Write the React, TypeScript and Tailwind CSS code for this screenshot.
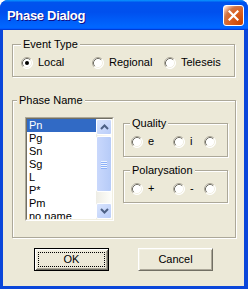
import React from "react";

// ── Bits ──────────────────────────────────────────────────────────────────────

const etched =
  "border border-[#ACA899] shadow-[1px_1px_0_#fff,inset_1px_1px_0_#fff]";

function Radio({ checked = false }: { checked?: boolean }) {
  return (
    <svg width="12" height="12" viewBox="0 0 12 12" className="shrink-0">
      <circle cx="6" cy="6" r="5.5" fill="#fff" />
      <path d="M2.11 9.89A5.5 5.5 0 0 1 9.89 2.11" fill="none" stroke="#ACA899" />
      <path d="M9.89 2.11A5.5 5.5 0 0 1 2.11 9.89" fill="none" stroke="#fff" />
      <path d="M2.82 9.18A4.5 4.5 0 0 1 9.18 2.82" fill="none" stroke="#716F64" />
      <path d="M9.18 2.82A4.5 4.5 0 0 1 2.82 9.18" fill="none" stroke="#F1EFE2" />
      {checked && <circle cx="6" cy="6" r="2" fill="#000" />}
    </svg>
  );
}

function RadioItem({ label, checked, w }: { label?: string; checked?: boolean; w: string }) {
  return (
    <label className={`flex items-center gap-[5px] h-[13px] ${w}`}>
      <Radio checked={checked} />
      {label && <span className="leading-[13px]">{label}</span>}
    </label>
  );
}

function ScrollButton({ dir }: { dir: "up" | "down" }) {
  return (
    <div className="h-[16px] w-[16px] rounded-[2px] border border-[#fff] bg-[linear-gradient(135deg,#d9e4fd,#b9cdf9)] flex items-center justify-center">
      <svg width="9" height="6" viewBox="0 0 9 6">
        <path
          d={dir === "up" ? "M1 5L4.5 1.5L8 5" : "M1 1L4.5 4.5L8 1"}
          fill="none"
          stroke="#4D6185"
          strokeWidth="2"
        />
      </svg>
    </div>
  );
}

// ── Listbox ───────────────────────────────────────────────────────────────────

const PHASES = ["Pn", "Pg", "Sn", "Sg", "L", "P*", "Pm", "no name"];

function ListBox() {
  return (
    <div className="w-[89px] h-[104px] border border-t-[#ACA899] border-l-[#ACA899] border-r-white border-b-white">
      <div className="h-full flex border border-t-[#716F64] border-l-[#716F64] border-r-[#F1EFE2] border-b-[#F1EFE2] bg-white">
        <div className="flex-1 overflow-hidden">
          {PHASES.map((p, i) => (
            <div
              key={p}
              className={`h-[13px] leading-[13px] pl-[2px] whitespace-nowrap ${
                i === 0 ? "bg-[#316AC5] text-white" : "text-black"
              }`}
            >
              {p}
            </div>
          ))}
        </div>
        <div className="w-[16px] flex flex-col bg-[linear-gradient(90deg,#EEEDE5,#FEFEFB)]">
          <ScrollButton dir="up" />
          <div className="flex-1 pt-[1px]">
            <div className="h-[56px] rounded-[2px] border border-white bg-[linear-gradient(90deg,#c9d8fc,#b6cbf8)] flex flex-col items-center justify-center gap-[1px]">
              {[0, 1, 2, 3].map((k) => (
                <div key={k} className="w-[6px] h-[1px] bg-[#EEF4FE] shadow-[0_1px_0_#8CB0F8]" />
              ))}
            </div>
          </div>
          <ScrollButton dir="down" />
        </div>
      </div>
    </div>
  );
}

// ── Dialog ────────────────────────────────────────────────────────────────────

export default function App() {
  return (
    <div className="w-[248px] h-[289px] flex flex-col rounded-t-[8px] overflow-hidden bg-[#0A46DA] font-['Liberation_Sans',Arial,sans-serif] text-[11px] text-black select-none">
      {/* Title bar */}
      <div className="h-[30px] shrink-0 flex items-start bg-[linear-gradient(180deg,#0997ff,#0053ee_8%,#0050ee_40%,#06f_88%,#06f_93%,#005bff_95%,#003dd7_96%,#003dd7)]">
        <div className="ml-[7px] mt-[8px] leading-[15px] text-[13px] font-bold tracking-[-0.3px] text-white [text-shadow:1px_1px_#0f1089]">
          Phase Dialog
        </div>
        <button className="ml-auto mr-[4px] mt-[5px] w-[21px] h-[21px] rounded-[3px] border border-white bg-[radial-gradient(circle_at_90%_90%,#cc4600_0%,#dc6527_55%,#cd7546_70%,#ffccb2_90%,#fff_100%)] flex items-center justify-center">
          <svg width="11" height="11" viewBox="0 0 11 11">
            <path d="M1.5 1.5L9.5 9.5M9.5 1.5L1.5 9.5" stroke="#fff" strokeWidth="2.2" strokeLinecap="square" />
          </svg>
        </button>
      </div>

      {/* Client area */}
      <div className="flex-1 ml-[3px] mr-[4px] mb-[3px] bg-[#ECE9D8] flex flex-col">
        <fieldset className={`ml-[9px] mt-[8px] w-[223px] pl-[8px] pb-[7px] ${etched}`}>
          <legend className="px-[2px] leading-[13px] bg-[#ECE9D8]">Event Type</legend>
          <div className="mt-[5px] flex">
            <RadioItem label="Local" checked w="w-[71px]" />
            <RadioItem label="Regional" w="w-[72px]" />
            <RadioItem label="Teleseis" w="w-[60px]" />
          </div>
        </fieldset>

        <fieldset className={`ml-[9px] mt-[17px] w-[224px] pl-[4px] pb-[16px] ${etched}`}>
          <legend className="px-[2px] leading-[13px] bg-[#ECE9D8]">Phase Name</legend>
          <div className="ml-[8px] mt-[10px] flex items-start">
            <ListBox />
            <div className="ml-[9px] flex flex-col">
              <fieldset className={`w-[105px] pl-[7px] pb-[8px] ${etched}`}>
                <legend className="ml-[-1px] px-[2px] leading-[13px] bg-[#ECE9D8]">Quality</legend>
                <div className="mt-[5px] flex">
                  <RadioItem label="e" w="w-[42px]" />
                  <RadioItem label="i" w="w-[31px]" />
                  <RadioItem w="w-[12px]" />
                </div>
              </fieldset>
              <fieldset className={`mt-[7px] w-[105px] pl-[7px] pb-[7px] ${etched}`}>
                <legend className="ml-[-1px] px-[2px] leading-[13px] bg-[#ECE9D8]">Polarysation</legend>
                <div className="mt-[5px] flex">
                  <RadioItem label="+" w="w-[42px]" />
                  <RadioItem label="-" w="w-[31px]" />
                  <RadioItem w="w-[12px]" />
                </div>
              </fieldset>
            </div>
          </div>
        </fieldset>

        <div className="mt-[10px] ml-[31px] flex gap-[29px]">
          <button className="w-[75px] h-[23px] p-[3px] bg-[#ECE9D8] border border-black shadow-[inset_1px_1px_#fff,inset_-1px_-1px_#716F64,inset_2px_2px_#F1EFE2,inset_-2px_-2px_#ACA899] flex">
            <span className="flex-1 border border-dotted border-black flex items-center justify-center leading-[13px]">
              OK
            </span>
          </button>
          <button className="w-[75px] h-[23px] bg-[#ECE9D8] border border-t-white border-l-white border-r-[#716F64] border-b-[#716F64] shadow-[inset_1px_1px_#F1EFE2,inset_-1px_-1px_#ACA899] flex items-center justify-center leading-[13px]">
            Cancel
          </button>
        </div>
      </div>
    </div>
  );
}
